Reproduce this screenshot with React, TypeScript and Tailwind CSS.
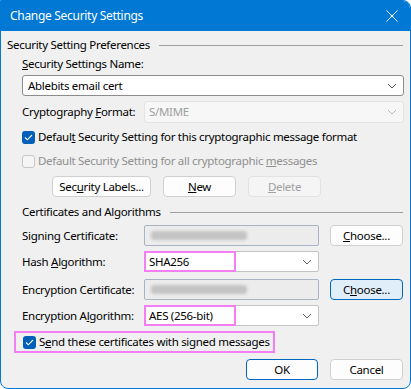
import React from 'react';

const font = { fontFamily: '"Noto Sans", "Open Sans", sans-serif' };

function Chevron({ disabled }: { disabled?: boolean }) {
  return (
    <svg width="10" height="6" viewBox="0 0 10 6" className="shrink-0">
      <path d="M1 1 L5 5 L9 1" fill="none" stroke={disabled ? '#b8b8b8' : '#606060'} strokeWidth="1" />
    </svg>
  );
}

function Check({ checked, disabled }: { checked?: boolean; disabled?: boolean }) {
  if (checked) {
    return (
      <div className="w-[13px] h-[13px] rounded-[3px] bg-[#005fb8] flex items-center justify-center shrink-0">
        <svg width="9" height="7" viewBox="0 0 9 7">
          <path d="M1 3.5 L3.3 5.8 L8 1" fill="none" stroke="#ffffff" strokeWidth="1.1" />
        </svg>
      </div>
    );
  }
  return (
    <div
      className={`w-[13px] h-[13px] rounded-[3px] border shrink-0 ${disabled ? 'border-[#c6c6c6] bg-[#f5f5f5]' : 'border-[#8a8a8a] bg-white'}`}
    />
  );
}

function GroupHeader({ title, className }: { title: string; className?: string }) {
  return (
    <div className={`h-[16px] flex items-center gap-[9px] pr-[7px] ${className ?? ''}`}>
      <span className="whitespace-nowrap">{title}</span>
      <div className="flex-1 h-px bg-[#a0a0a0]" />
    </div>
  );
}

function Button({ children, w, variant }: { children: React.ReactNode; w: string; variant?: 'default' | 'focus' | 'disabled' }) {
  const cls =
    variant === 'default'
      ? 'bg-[#fdfdfd] border-[#0067c0] text-black'
      : variant === 'focus'
        ? 'bg-[#e0eef9] border-[#0067c0] text-black'
        : variant === 'disabled'
          ? 'bg-[#f5f5f5] border-[#e2e2e2] text-[#a0a0a0]'
          : 'bg-[#fdfdfd] border-[#d0d0d0] text-black';
  return (
    <div className={`${w} h-[21px] rounded-[4px] border flex items-center justify-center whitespace-nowrap ${cls}`}>{children}</div>
  );
}

function CertField() {
  return (
    <div className="w-[175px] h-[21px] bg-[#ececec] border border-[#a9b4c2] rounded-[2px] flex items-center pl-[6px]">
      <div className="w-[96px] h-[9px] bg-[#c4c4c4] rounded-[3px] blur-[1.5px]" />
    </div>
  );
}

function AlgoSelect({ value }: { value: string }) {
  return (
    <div className="relative w-[175px] h-[21px] bg-white border border-[#c4c4c4] rounded-[2px] flex items-center justify-end pr-[6px]">
      <div className="absolute left-[-1px] top-[-1px] w-[92px] h-[21px] border-2 border-[#f47ef4] flex items-center pl-[3px] whitespace-nowrap">
        {value}
      </div>
      <Chevron />
    </div>
  );
}

export default function App() {
  return (
    <div className="w-[411px] h-[389px] bg-white text-[11.5px] tracking-[-0.3px] text-black whitespace-nowrap" style={font}>
      <div className="w-[411px] h-[389px] border border-[#0078d4] rounded-tr-[8px] rounded-b-[8px] overflow-hidden bg-[#f0f0f0] flex flex-col">
        <div className="h-[30px] bg-[#0078d4] flex items-center justify-between pl-[9px] pr-[12px] text-white text-[12px] shrink-0">
          <span>Change Security Settings</span>
          <svg width="12" height="12" viewBox="0 0 12 12">
            <path d="M0.5 0.5 L11.5 11.5 M11.5 0.5 L0.5 11.5" stroke="#ffffff" strokeWidth="1" />
          </svg>
        </div>

        <GroupHeader title="Security Setting Preferences" className="mt-[6px] pl-[6px]" />

        <div className="mt-[3px] h-[16px] flex items-center pl-[21px]">
          <span>
            <u>S</u>ecurity Settings Name:
          </span>
        </div>

        <div className="mt-[3px] ml-[21px] w-[382px] h-[21px] bg-white border border-[#8c8c8c] rounded-[3px] flex items-center justify-between pl-[5px] pr-[6px]">
          <span>Ablebits email cert</span>
          <Chevron />
        </div>

        <div className="mt-[5px] h-[22px] flex items-center pl-[21px]">
          <span className="w-[122px] shrink-0">
            Cryptography <u>F</u>ormat:
          </span>
          <div className="w-[260px] h-[22px] bg-[#f7f7f7] border border-[#e4e4e4] rounded-[3px] flex items-center justify-between pl-[4px] pr-[6px] text-[#a0a0a0]">
            <span>S/MIME</span>
            <Chevron disabled />
          </div>
        </div>

        <div className="mt-[6px] h-[16px] flex items-center pl-[21px] gap-[3px]">
          <Check checked />
          <span>
            Defaul<u>t</u> Security Setting for this cryptographic message format
          </span>
        </div>

        <div className="mt-[8px] h-[16px] flex items-center pl-[21px] gap-[3px] text-[#8f8f8f]">
          <Check disabled />
          <span>
            Default Security Setting for all cryptographic <u>m</u>essages
          </span>
        </div>

        <div className="mt-[7px] flex items-center pl-[51px] gap-[12px]">
          <Button w="w-[99px]">
            <span>
              Sec<u>u</u>rity Labels...
            </span>
          </Button>
          <Button w="w-[73px]">
            <span>
              <u>N</u>ew
            </span>
          </Button>
          <Button w="w-[73px]" variant="disabled">
            <span>
              <u>D</u>elete
            </span>
          </Button>
        </div>

        <GroupHeader title="Certificates and Algorithms" className="mt-[7px] pl-[21px]" />

        <div className="mt-[5px] h-[21px] flex items-center pl-[21px]">
          <span className="w-[122px] shrink-0">Signing Certificate:</span>
          <CertField />
          <div className="ml-[11px]">
            <Button w="w-[73px]">
              <span>
                <u>C</u>hoose...
              </span>
            </Button>
          </div>
        </div>

        <div className="mt-[5px] h-[21px] flex items-center pl-[21px]">
          <span className="w-[122px] shrink-0">
            Hash <u>A</u>lgorithm:
          </span>
          <AlgoSelect value="SHA256" />
        </div>

        <div className="mt-[7px] h-[21px] flex items-center pl-[21px]">
          <span className="w-[122px] shrink-0">Encryption Certificate:</span>
          <CertField />
          <div className="ml-[11px]">
            <Button w="w-[73px]" variant="focus">
              <span>
                C<u>h</u>oose...
              </span>
            </Button>
          </div>
        </div>

        <div className="mt-[5px] h-[21px] flex items-center pl-[21px]">
          <span className="w-[122px] shrink-0">
            Encryption A<u>l</u>gorithm:
          </span>
          <AlgoSelect value="AES (256-bit)" />
        </div>

        <div className="mt-[5px] ml-[13px] w-[261px] h-[22px] border-2 border-[#f47ef4] flex items-center pl-[7px] gap-[3px]">
          <Check checked />
          <span>
            S<u>e</u>nd these certificates with signed messages
          </span>
        </div>

        <div className="mt-[6px] flex justify-end pr-[7px] gap-[12px]">
          <Button w="w-[72px]" variant="default">
            OK
          </Button>
          <Button w="w-[73px]">Cancel</Button>
        </div>
      </div>
    </div>
  );
}
